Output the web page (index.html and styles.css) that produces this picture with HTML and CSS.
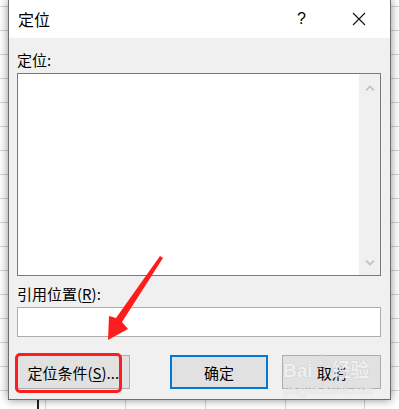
FILE: index.html
```html
<!DOCTYPE html>
<html>
<head>
  <title>定位</title>
  <link rel="stylesheet" href="styles.css">
</head>
<body>
  <div class="dialog">
    <div class="title-bar">
      <span class="title">定位</span>
      <span class="help">?</span>
      <svg class="close" width="14" height="14" viewBox="0 0 14 14">
        <path d="M1 1 L13 13 M13 1 L1 13" stroke="#111" stroke-width="1.1" fill="none"/>
      </svg>
    </div>

    <div class="dialog-body">
      <div class="label">定位:</div>
      <div class="list-box">
        <div class="list-items"></div>
        <div class="scrollbar">
          <svg width="10" height="6" viewBox="0 0 10 6"><path d="M1 5.5 L5 1.5 L9 5.5" stroke="#c4c4c4" stroke-width="1.8" fill="none"/></svg>
          <svg width="10" height="6" viewBox="0 0 10 6"><path d="M1 0.5 L5 4.5 L9 0.5" stroke="#c4c4c4" stroke-width="1.8" fill="none"/></svg>
        </div>
      </div>

      <div class="label label-ref">引用位置(<u>R</u>):</div>
      <div class="text-input"></div>

      <div class="button-row">
        <div class="btn btn-special">定位条件(<u>S</u>)...</div>
        <div class="btn btn-ok">确定</div>
        <div class="btn btn-cancel">取消</div>
      </div>
    </div>

    <!-- 红框标注 -->
    <div class="highlight"></div>
    <!-- 水印 -->
    <div class="watermark">
      <div class="wm-logo">Bai<span class="wm-paw">❀</span>经验</div>
      <div class="wm-url">jingyan.baidu.com</div>
    </div>
  </div>

  <div class="sheet-below">
    <div class="cell-edge"></div>
  </div>

  <svg class="arrow" width="399" height="409" viewBox="0 0 399 409">
    <polygon points="160,256 163,258 122,322 128,329 108,340 109,316 116,318" fill="#ff1c1c"/>
  </svg>
</body>
</html>
```

FILE: styles.css
```css
/* 页面 & 表格背景 */
body {
  margin: 0;
  width: 399px;
  height: 409px;
  overflow: hidden;
  position: relative;
  font-family: "Noto Sans CJK SC", "Noto Sans", sans-serif;
  color: #000;
  background-color: #fff;
  background-image:
    repeating-linear-gradient(to bottom, transparent 0, transparent 6px, #d4d4d4 6px, #d4d4d4 7px, transparent 7px, transparent 24px),
    repeating-linear-gradient(to right, transparent 0, transparent 45px, #d4d4d4 45px, #d4d4d4 46px, transparent 46px, transparent 80px);
  background-position: 0 0, -80px 0;
}

/* 对话框 */
.dialog {
  position: relative;
  margin-left: 8px;
  width: 381px;
  height: 399px;
  border: 1px solid #6e6e6e;
  border-top: none;
  background: #f0f0f0;
  box-shadow: 0 0 9px rgba(0, 0, 0, 0.45);
}

.title-bar {
  height: 38px;
  background: #fff;
  display: flex;
  align-items: center;
  padding-left: 9px;
}

.title {
  font-size: 16px;
  flex: 1;
}

.help {
  font-family: "Liberation Sans", sans-serif;
  font-size: 16px;
  margin-right: 46px;
}

.close {
  margin-right: 24px;
}

.dialog-body {
  padding: 12px 9px 0 8px;
}

.label {
  font-size: 15px;
  line-height: 20px;
  height: 20px;
  margin-bottom: 3px;
}

.label u, .btn u {
  text-decoration-thickness: 1px;
  text-underline-offset: 2px;
}

.list-box {
  height: 201px;
  border: 1px solid #7a7a7a;
  background: #fff;
  display: flex;
}

.list-items {
  flex: 1;
}

.scrollbar {
  width: 21px;
  background: #f0f0f0;
  display: flex;
  flex-direction: column;
  justify-content: space-between;
  align-items: center;
  padding: 11px 0 9px;
}

.label-ref {
  margin-top: 8px;
}

.text-input {
  height: 28px;
  border: 1px solid #adadad;
  background: #fff;
}

.button-row {
  display: flex;
  margin-top: 18px;
}

.btn {
  height: 32px;
  box-sizing: content-box;
  border: 1px solid #adadad;
  background: #e1e1e1;
  font-size: 15px;
  display: flex;
  align-items: center;
  justify-content: center;
}

.btn-special {
  width: 111px;
}

.btn-ok {
  width: 95px;
  height: 30px;
  border: 2px solid #0078d7;
  margin-left: 40px;
}

.btn-cancel {
  width: 97px;
  margin-left: 14px;
}

/* 标注 */
.highlight {
  position: absolute;
  left: 6px;
  top: 353px;
  width: 101px;
  height: 34px;
  border: 3.5px solid #ff1c1c;
  border-radius: 5px;
}

.watermark {
  position: absolute;
  left: 274px;
  top: 360px;
  color: rgba(255, 255, 255, 0.8);
  text-shadow: 0 0 1px rgba(140, 140, 140, 0.5);
  pointer-events: none;
}

.wm-logo {
  font-family: "Liberation Sans", "Noto Sans CJK SC", sans-serif;
  font-size: 19px;
  font-weight: bold;
  line-height: 22px;
  white-space: nowrap;
}

.wm-paw {
  display: inline-block;
  font-size: 15px;
  margin: 0 2px;
  transform: translateY(-10px);
}

.wm-url {
  font-family: "Liberation Serif", serif;
  font-size: 12px;
  line-height: 14px;
  margin-left: 1px;
}

.sheet-below {
  height: 9px;
}

.cell-edge {
  margin-left: 37px;
  width: 2px;
  height: 9px;
  background: #222;
}

.arrow {
  position: absolute;
  left: 0;
  top: 0;
  pointer-events: none;
}
```
